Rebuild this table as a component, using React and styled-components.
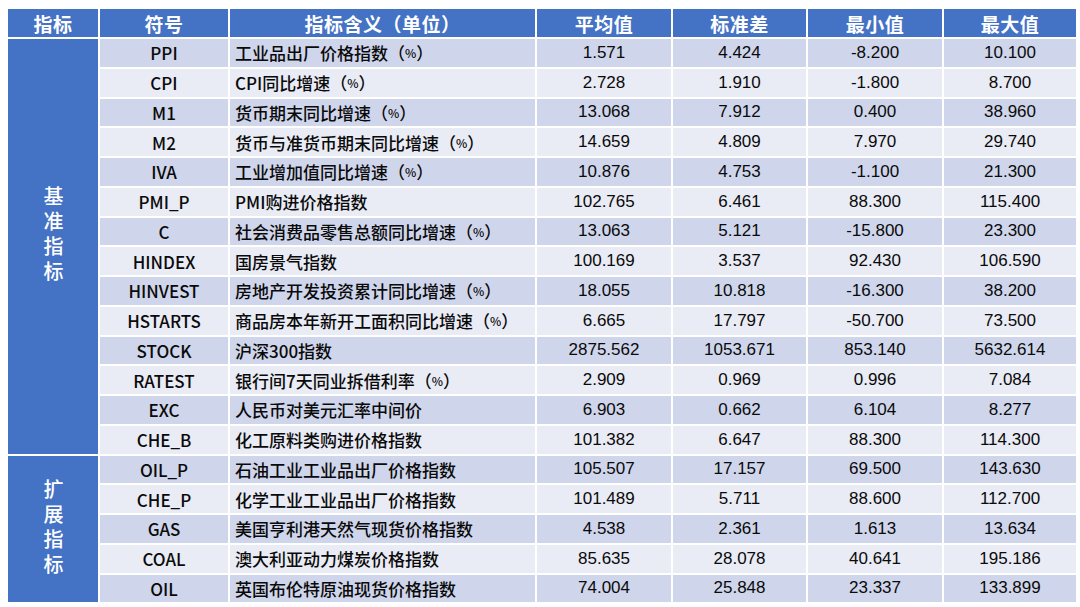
import React from "react";
import styled, { createGlobalStyle } from "styled-components";

const GlobalStyle = createGlobalStyle`
  html, body {
    margin: 0;
    padding: 0;
    background: #ffffff;
  }
  body {
    font-family: "Noto Sans CJK SC", "Liberation Sans", sans-serif;
  }
`;

const Page = styled.div`
  padding: 9px 4px 0 8px;
`;

const Grid = styled.div`
  display: grid;
  grid-template-columns: 90px 128px 305px 134px 133px 134px 132px;
  grid-template-rows: 28px repeat(19, 27.75px);
  gap: 2px;
`;

const HeadCell = styled.div`
  background: #4472c4;
  color: #ffffff;
  font-size: 19px;
  font-weight: 700;
  display: flex;
  align-items: center;
  justify-content: center;
  letter-spacing: 0.5px;
`;

const GroupCell = styled.div`
  grid-row: span ${(p) => p.$span};
  background: #4472c4;
  color: #ffffff;
  display: flex;
  align-items: center;
  justify-content: center;
  padding-bottom: ${(p) => p.$lift || 0}px;
`;

const VerticalLabel = styled.span`
  writing-mode: vertical-rl;
  text-orientation: upright;
  font-size: 20px;
  font-weight: 500;
  letter-spacing: 5px;
  line-height: 1;
`;

const Cell = styled.div`
  background: ${(p) => (p.$dark ? "#cfd5ea" : "#e9ebf5")};
  color: #0a0a0a;
  font-size: 17px;
  font-weight: ${(p) => (p.$num ? 400 : 500)};
  display: flex;
  align-items: center;
  justify-content: ${(p) => (p.$left ? "flex-start" : "center")};
  padding-left: ${(p) => (p.$left ? "5px" : "0")};
  white-space: nowrap;
  font-family: ${(p) =>
    p.$num
      ? '"Liberation Sans", "Noto Sans CJK SC", sans-serif'
      : '"Noto Sans CJK SC", "Liberation Sans", sans-serif'};
`;

const Pct = styled.span`
  font-size: 12px;
`;

const headers = ["指标", "符号", "指标含义（单位）", "平均值", "标准差", "最小值", "最大值"];

const rows = [
  ["PPI", "工业品出厂价格指数", true, "1.571", "4.424", "-8.200", "10.100"],
  ["CPI", "CPI同比增速", true, "2.728", "1.910", "-1.800", "8.700"],
  ["M1", "货币期末同比增速", true, "13.068", "7.912", "0.400", "38.960"],
  ["M2", "货币与准货币期末同比增速", true, "14.659", "4.809", "7.970", "29.740"],
  ["IVA", "工业增加值同比增速", true, "10.876", "4.753", "-1.100", "21.300"],
  ["PMI_P", "PMI购进价格指数", false, "102.765", "6.461", "88.300", "115.400"],
  ["C", "社会消费品零售总额同比增速", true, "13.063", "5.121", "-15.800", "23.300"],
  ["HINDEX", "国房景气指数", false, "100.169", "3.537", "92.430", "106.590"],
  ["HINVEST", "房地产开发投资累计同比增速", true, "18.055", "10.818", "-16.300", "38.200"],
  ["HSTARTS", "商品房本年新开工面积同比增速", true, "6.665", "17.797", "-50.700", "73.500"],
  ["STOCK", "沪深300指数", false, "2875.562", "1053.671", "853.140", "5632.614"],
  ["RATEST", "银行间7天同业拆借利率", true, "2.909", "0.969", "0.996", "7.084"],
  ["EXC", "人民币对美元汇率中间价", false, "6.903", "0.662", "6.104", "8.277"],
  ["CHE_B", "化工原料类购进价格指数", false, "101.382", "6.647", "88.300", "114.300"],
  ["OIL_P", "石油工业工业品出厂价格指数", false, "105.507", "17.157", "69.500", "143.630"],
  ["CHE_P", "化学工业工业品出厂价格指数", false, "101.489", "5.711", "88.600", "112.700"],
  ["GAS", "美国亨利港天然气现货价格指数", false, "4.538", "2.361", "1.613", "13.634"],
  ["COAL", "澳大利亚动力煤炭价格指数", false, "85.635", "28.078", "40.641", "195.186"],
  ["OIL", "英国布伦特原油现货价格指数", false, "74.004", "25.848", "23.337", "133.899"],
];

const groups = [
  { label: "基准指标", start: 0, span: 14, lift: 20 },
  { label: "扩展指标", start: 14, span: 5, lift: 0 },
];

export default function App() {
  return (
    <Page>
      <GlobalStyle />
      <Grid>
        {headers.map((h) => (
          <HeadCell key={h}>{h}</HeadCell>
        ))}
        {rows.map((r, i) => {
          const dark = i % 2 === 0;
          const group = groups.find((g) => g.start === i);
          return (
            <React.Fragment key={r[0]}>
              {group && (
                <GroupCell $span={group.span} $lift={group.lift}>
                  <VerticalLabel>{group.label}</VerticalLabel>
                </GroupCell>
              )}
              <Cell $dark={dark}>{r[0]}</Cell>
              <Cell $dark={dark} $left>
                {r[1]}
                {r[2] && (
                  <>
                    （<Pct>%</Pct>）
                  </>
                )}
              </Cell>
              <Cell $dark={dark} $num>{r[3]}</Cell>
              <Cell $dark={dark} $num>{r[4]}</Cell>
              <Cell $dark={dark} $num>{r[5]}</Cell>
              <Cell $dark={dark} $num>{r[6]}</Cell>
            </React.Fragment>
          );
        })}
      </Grid>
    </Page>
  );
}
